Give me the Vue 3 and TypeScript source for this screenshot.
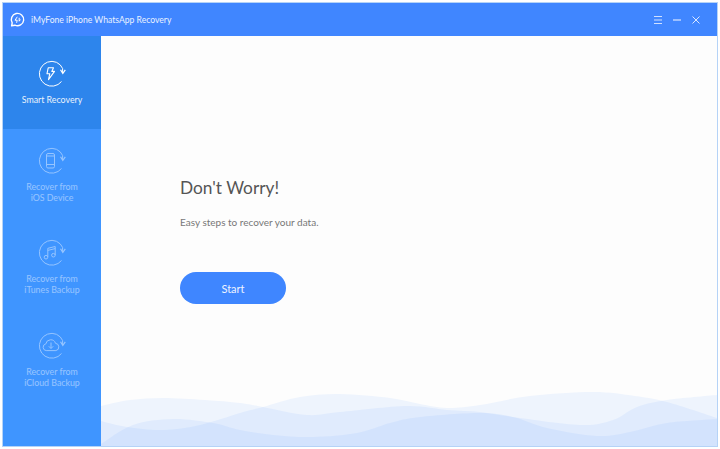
<script setup lang="ts">
type Pt = [number, number]

const navItems = [
  { id: 'smart', lines: ['Smart Recovery'], active: true },
  { id: 'ios', lines: ['Recover from', 'iOS Device'], active: false },
  { id: 'itunes', lines: ['Recover from', 'iTunes Backup'], active: false },
  { id: 'icloud', lines: ['Recover from', 'iCloud Backup'], active: false },
]

// smooth curve through the points, closed along the bottom of the window
function wave(points: Pt[]): string {
  let d = `M${points[0][0]} ${points[0][1]}`
  for (let i = 0; i < points.length - 1; i++) {
    const p0 = points[Math.max(i - 1, 0)]
    const p1 = points[i]
    const p2 = points[i + 1]
    const p3 = points[Math.min(i + 2, points.length - 1)]
    const c1x = p1[0] + (p2[0] - p0[0]) / 6
    const c1y = p1[1] + (p2[1] - p0[1]) / 6
    const c2x = p2[0] - (p3[0] - p1[0]) / 6
    const c2y = p2[1] - (p3[1] - p1[1]) / 6
    d += `C${c1x.toFixed(1)} ${c1y.toFixed(1)} ${c2x.toFixed(1)} ${c2y.toFixed(1)} ${p2[0]} ${p2[1]}`
  }
  const last = points[points.length - 1]
  return `${d}L${last[0]} 446L${points[0][0]} 446Z`
}

const waves = [
  wave([[101, 406], [130, 400], [163, 398], [205, 400], [240, 403], [263, 407], [307, 415], [340, 412], [407, 406], [447, 410], [480, 412], [513, 417], [580, 425], [613, 420], [637, 407], [667, 400], [717, 395]]),
  wave([[101, 421], [127, 427], [163, 430], [200, 425], [240, 413], [263, 407], [300, 397], [340, 394], [390, 398], [420, 404], [447, 408], [480, 405], [530, 396], [593, 392], [635, 396], [667, 402], [717, 418]]),
  wave([[101, 444], [133, 425], [173, 419], [213, 423], [240, 430], [273, 435], [313, 437], [357, 433], [390, 423], [420, 417], [480, 413], [513, 417], [547, 428], [597, 436], [630, 432], [667, 423], [717, 419]]),
]
</script>

<template>
  <div class="window">
    <header class="titlebar">
      <svg class="logo" width="18" height="18" viewBox="0 0 18 18" fill="none" stroke="#fff" stroke-width="1.4">
        <path d="M3.6 14.8l.6-3A6.2 6.2 0 1 1 6.9 14.2z" stroke-linejoin="round" />
        <path d="M9.3 5.8L7 9.2h2.2l-.6 2.6" stroke-width="1" />
        <path d="M11.2 6.8v3.4M12.4 8.6l-1.2 1.6" stroke-width="1" />
      </svg>
      <span class="title">iMyFone iPhone WhatsApp Recovery</span>
      <div class="controls">
        <svg width="8" height="8" viewBox="0 0 8 8" stroke="#cfe0ff" stroke-width="1"><path d="M0 .5h8M0 4h8M0 7.5h8" /></svg>
        <svg width="8" height="8" viewBox="0 0 8 8" stroke="#dbe7ff" stroke-width="1.2"><path d="M0 4h8" /></svg>
        <svg width="8" height="8" viewBox="0 0 8 8" stroke="#dbe7ff" stroke-width="1"><path d="M.5.5l7 7M7.500.5l-7 7" /></svg>
      </div>
    </header>

    <div class="body">
      <nav class="sidebar">
        <div v-for="item in navItems" :key="item.id" class="nav-item" :class="{ active: item.active }">
          <svg class="nav-icon" width="28" height="28" viewBox="0 0 28 28" fill="none" stroke="#fff" stroke-width="1">
            <path d="M23.500 21.500A12.400 12.400 0 1 1 18.500 2.300Q23 4.500 24.600 8.500V13" />
            <path d="M22.500 9.800l2.300 3.600 2.500-3.600" stroke-width="1.200" />
            <g v-if="item.id === 'smart'" stroke-width="1.100" stroke-linejoin="round">
              <path d="M10.200 7.800h5.300l-1.700 3.600h2.700l-6 8.200 1.300-5.900H9z" />
            </g>
            <g v-else-if="item.id === 'ios'">
              <rect x="8.500" y="6.500" width="8" height="14.500" rx="1.500" />
              <path d="M8.500 17.500h8M8.500 9h8" />
            </g>
            <g v-else-if="item.id === 'itunes'">
              <path d="M9.800 18V9.300l7.400-1.800v8.500M9.800 11.400l7.400-1.800" />
              <circle cx="8" cy="18.200" r="1.800" />
              <circle cx="15.400" cy="16.200" r="1.800" />
            </g>
            <g v-else>
              <path d="M8.200 18.600a3.400 3.400 0 0 1-.4-6.700 5 5 0 0 1 9.700-.6 3.700 3.700 0 0 1 .4 7.300z" stroke-linejoin="round" />
              <path d="M13 10.500v5.800M10.800 14.300l2.200 2.200 2.200-2.200" />
            </g>
          </svg>
          <div class="nav-label">
            <span v-for="line in item.lines" :key="line">{{ line }}</span>
          </div>
        </div>
      </nav>

      <main class="content">
        <svg class="waves" width="616" height="61" viewBox="101 385 616 61">
          <path v-for="(d, i) in waves" :key="i" :d="d" fill="#3f86ff" fill-opacity="0.08" />
        </svg>
        <h1>Don't Worry!</h1>
        <p>Easy steps to recover your data.</p>
        <button class="start" type="button">Start</button>
      </main>
    </div>
  </div>
</template>

<style scoped>
.window {
  box-sizing: border-box;
  width: 716px;
  height: 445px;
  margin: 2px;
  border: 1px solid #b5d3f7;
  display: flex;
  flex-direction: column;
  font-family: Lato, "Open Sans", "Liberation Sans", sans-serif;
  overflow: hidden;
}
.titlebar {
  flex: none;
  height: 33px;
  background: #4086ff;
  display: flex;
  align-items: center;
  padding-left: 5px;
  color: #fff;
}
.logo {
  flex: none;
}
.title {
  margin-left: 5px;
  font-size: 8.600px;
  color: #eaf2ff;
}
.controls {
  margin-left: auto;
  margin-right: 17px;
  display: flex;
  gap: 11px;
}
.controls svg {
  display: block;
}
.body {
  flex: 1;
  display: flex;
  min-height: 0;
}
.sidebar {
  flex: none;
  width: 98px;
  background: #3f95ff;
  display: flex;
  flex-direction: column;
}
.nav-item {
  height: 92.500px;
  flex: none;
  display: flex;
  flex-direction: column;
  align-items: center;
  justify-content: center;
  gap: 6px;
  opacity: 0.45;
}
.nav-item.active {
  background: #2d85ec;
  opacity: 1;
}
.nav-item.active .nav-label {
  opacity: 0.9;
}
.nav-icon {
  display: block;
}
.nav-label {
  display: flex;
  flex-direction: column;
  align-items: center;
  font-size: 8.800px;
  line-height: 11px;
  color: #fff;
}
.content {
  flex: 1;
  position: relative;
  background: #fdfdfd;
  padding: 139px 0 0 79px;
  box-sizing: border-box;
}
.waves {
  position: absolute;
  left: 0;
  bottom: 0;
  display: block;
}
h1 {
  margin: 0;
  font-size: 17.300px;
  font-weight: 400;
  line-height: 26px;
  color: #555;
}
p {
  margin: 14px 0 0;
  font-size: 10px;
  line-height: 14px;
  color: #777;
}
.start {
  display: block;
  margin-top: 43px;
  width: 106px;
  height: 32px;
  border: none;
  border-radius: 16px;
  background: #3f86ff;
  color: #eef4ff;
  font-family: inherit;
  font-size: 11px;
  padding: 0;
}
</style>
